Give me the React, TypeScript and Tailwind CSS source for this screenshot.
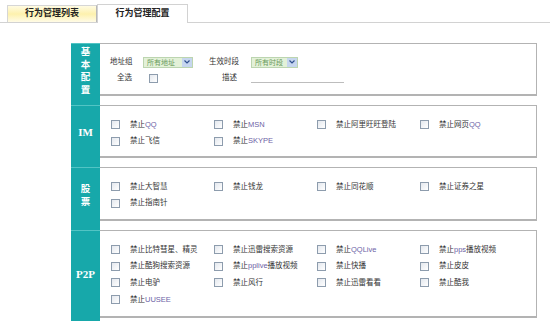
import type { ReactNode } from "react";

type Item = { zh: string; en?: string; tail?: string };

const imItems: Item[] = [
  { zh: "禁止", en: "QQ" },
  { zh: "禁止", en: "MSN" },
  { zh: "禁止阿里旺旺登陆" },
  { zh: "禁止网页", en: "QQ" },
  { zh: "禁止飞信" },
  { zh: "禁止", en: "SKYPE" },
];

const stockItems: Item[] = [
  { zh: "禁止大智慧" },
  { zh: "禁止钱龙" },
  { zh: "禁止同花顺" },
  { zh: "禁止证券之星" },
  { zh: "禁止指南针" },
];

const p2pItems: Item[] = [
  { zh: "禁止比特彗星、精灵" },
  { zh: "禁止迅雷搜索资源" },
  { zh: "禁止", en: "QQLive" },
  { zh: "禁止", en: "pps", tail: "播放视频" },
  { zh: "禁止酷狗搜索资源" },
  { zh: "禁止", en: "pplive", tail: "播放视频" },
  { zh: "禁止快播" },
  { zh: "禁止皮皮" },
  { zh: "禁止电驴" },
  { zh: "禁止风行" },
  { zh: "禁止迅雷看看" },
  { zh: "禁止酷我" },
  { zh: "禁止", en: "UUSEE" },
];

function Checkbox() {
  return (
    <span className="block w-[9px] h-[9px] shrink-0 border border-[#8d9cad] bg-gradient-to-br from-[#e4e8ee] to-white" />
  );
}

function Select({ text, width }: { text: string; width: string }) {
  return (
    <div className={`flex h-[11px] ${width} border border-[#bcd5b0] bg-[#e3f1d8]`}>
      <span className="flex-1 pl-[3px] text-[7px] leading-[9px] text-[#6a9a5c]">{text}</span>
      <span className="flex w-[10px] items-center justify-center bg-[#c6d6ef]">
        <svg width="6" height="4" viewBox="0 0 6 4">
          <path d="M0.5 0.5 L3 3 L5.5 0.5" fill="none" stroke="#2f4f8f" strokeWidth="1.2" />
        </svg>
      </span>
    </div>
  );
}

function Section({ label, children, last }: { label: ReactNode; children: ReactNode; last?: boolean }) {
  return (
    <div className="flex">
      <div
        className={`flex w-[29px] items-center justify-center border-t border-[#52c4c4] bg-[#17a8aa] text-white font-bold ${
          last ? "pb-[5px]" : "pb-[9px]"
        }`}
      >
        {label}
      </div>
      <div className={`flex-1 ${last ? "pb-[5px]" : "pb-[9px]"}`}>{children}</div>
    </div>
  );
}

function VLabel({ text }: { text: string }) {
  return (
    <div className="flex flex-col items-center text-[9.5px] leading-[12.5px] font-['Noto_Sans_CJK_SC',sans-serif]">
      {text.split("").map((c, i) => (
        <span key={i} className="block h-[12.5px]">
          {c}
        </span>
      ))}
    </div>
  );
}

function CheckGrid({ items, height }: { items: Item[]; height: string }) {
  return (
    <div className={`${height} border border-l-0 border-b-2 border-[#b3b3b3] bg-white pl-[11px] pt-[10px]`}>
      <div className="grid grid-cols-[repeat(4,103px)] auto-rows-[16.7px]">
        {items.map((it, i) => (
          <div key={i} className="flex items-center">
            <Checkbox />
            <span className="ml-[10px] text-[7.5px] text-[#333] whitespace-nowrap">
              {it.zh}
              {it.en && <span className="text-[#6d5fa6]">{it.en}</span>}
              {it.tail}
            </span>
          </div>
        ))}
      </div>
    </div>
  );
}

export default function App() {
  return (
    <div className="w-[550px] h-[321px] overflow-hidden bg-white font-['Liberation_Sans','Noto_Sans_CJK_SC',sans-serif] text-[#333]">
      <div className="flex h-[23px] items-end border-b border-[#d2d2d2] pl-[7px]">
        <div className="flex h-[17px] w-[90px] items-center justify-center border border-b-0 border-[#d6d6d6] border-r-[#b8b8b8] bg-gradient-to-b from-[#fffbe2] via-[#fdf1ad] to-[#fffbe6] text-[9px] font-bold text-[#222]">
          行为管理列表
        </div>
        <div className="-mb-px flex h-[19px] w-[91px] items-center justify-center border border-b-0 border-[#d2d2d2] bg-white text-[9px] font-bold text-[#222]">
          行为管理配置
        </div>
      </div>

      <div className="ml-[71px] w-[466px] pt-[20px]">
        <Section label={<VLabel text="基本配置" />}>
          <div className="h-[53px] border border-l-0 border-b-2 border-[#b3b3b3] pt-[10px] pl-[10px] text-[7.5px] text-[#333]">
            <div className="flex h-[16px] items-center">
              <span className="w-[22px] text-right whitespace-nowrap">地址组</span>
              <div className="w-[77px] pl-[11px]">
                <Select text="所有地址" width="w-[50px]" />
              </div>
              <span className="w-[30px] text-right whitespace-nowrap">生效时段</span>
              <div className="pl-[12px]">
                <Select text="所有时段" width="w-[47px]" />
              </div>
            </div>
            <div className="flex h-[16px] items-center">
              <span className="w-[22px] text-right">全选</span>
              <div className="w-[77px] pl-[17px]">
                <Checkbox />
              </div>
              <span className="w-[28px] text-right">描述</span>
              <div className="pl-[14px]">
                <div className="mt-[2px] h-[8px] w-[93px] border-b border-[#bdbdbd]" />
              </div>
            </div>
          </div>
        </Section>

        <Section label={<span className="font-['Liberation_Serif',serif] text-[11px]">IM</span>}>
          <CheckGrid items={imItems} height="h-[53px]" />
        </Section>

        <Section label={<VLabel text="股票" />}>
          <CheckGrid items={stockItems} height="h-[54px]" />
        </Section>

        <Section label={<span className="font-['Liberation_Serif',serif] text-[11px]">P2P</span>} last>
          <CheckGrid items={p2pItems} height="h-[88px]" />
        </Section>
      </div>
    </div>
  );
}
